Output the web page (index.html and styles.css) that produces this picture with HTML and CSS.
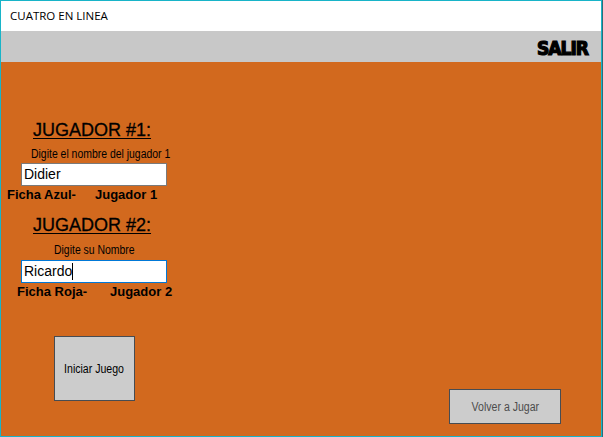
FILE: index.html
```html
<!DOCTYPE html>
<html>
<head>
<meta charset="utf-8">
<link rel="stylesheet" href="styles.css">
</head>
<body>
<div class="window">
  <div class="titlebar">CUATRO EN LINEA</div>
  <div class="toolbar"><span class="salir">SALIR</span></div>
  <div class="main">
    <div class="heading h1">JUGADOR #1:</div>
    <div class="label l1"><span class="narrow">Digite el nombre del jugador 1</span></div>
    <div class="textbox tb1">Didier</div>
    <div class="ficha f1"><span class="fname w1">Ficha Azul-</span><span>Jugador 1</span></div>
    <div class="heading h2">JUGADOR #2:</div>
    <div class="label l2"><span class="narrow">Digite su Nombre</span></div>
    <div class="textbox tb2 focused">Ricardo<span class="caret"></span></div>
    <div class="ficha f2"><span class="fname w2">Ficha Roja-</span><span>Jugador 2</span></div>
    <div class="buttons">
      <div class="btn btn-start"><span class="narrow-c">Iniciar Juego</span></div>
      <div class="btn btn-again"><span class="narrow-c">Volver a Jugar</span></div>
    </div>
  </div>
</div>
</body>
</html>
```

FILE: styles.css
```css
html, body {
  margin: 0;
  padding: 0;
}
body {
  background: #2a6d78;
  width: 603px;
  height: 437px;
  overflow: hidden;
}
.window {
  width: 600px;
  height: 435px;
  border: 1px solid #18b4c8;
  background: #ffffff;
  display: flex;
  flex-direction: column;
}
.titlebar {
  height: 30px;
  line-height: 30px;
  padding-left: 9px;
  font-family: "Open Sans", "Noto Sans", sans-serif;
  font-size: 11.5px;
  color: #000;
  background: #fff;
}
.toolbar {
  height: 31px;
  background: #c8c8c8;
  display: flex;
  justify-content: flex-end;
  align-items: center;
  padding-right: 13px;
}
.salir {
  font-family: "DejaVu Sans", sans-serif;
  font-stretch: condensed;
  font-weight: bold;
  font-size: 19px;
  letter-spacing: -1px;
  -webkit-text-stroke: 1.2px #000;
  color: #000;
  line-height: 20px;
  margin-top: 2px;
}
.main {
  flex: 1;
  background: #d2691e;
  display: flex;
  flex-direction: column;
  align-items: flex-start;
}
.heading {
  font-family: "Liberation Sans", Arial, sans-serif;
  font-size: 18px;
  line-height: 20px;
  height: 20px;
  text-decoration: underline;
  text-decoration-thickness: 1px;
  text-underline-offset: 2px;
  color: #000;
  margin-left: 32px;
  -webkit-text-stroke: 0.3px #000;
}
.h1 { margin-top: 58px; }
.h2 { margin-top: 13px; }
.label {
  font-family: "Liberation Sans", Arial, sans-serif;
  font-size: 12px;
  line-height: 13px;
  height: 13px;
  color: #000;
  white-space: nowrap;
}
.narrow {
  display: inline-block;
  transform: scaleX(0.87);
  transform-origin: left center;
}
.narrow-c {
  display: inline-block;
  white-space: nowrap;
  transform: scaleX(0.88);
  transform-origin: center center;
}
.l1 { margin-top: 8px; margin-left: 30px; }
.l2 { margin-top: 9px; margin-left: 53px; }
.textbox {
  width: 142px;
  height: 21px;
  border: 1px solid #7a7a7a;
  background: #fff;
  font-family: "Liberation Sans", Arial, sans-serif;
  font-size: 14px;
  line-height: 21px;
  padding-left: 2px;
  color: #000;
  margin-left: 20px;
  display: flex;
  align-items: center;
}
.tb1 { margin-top: 2px; }
.tb2 { margin-top: 3px; }
.focused { border-color: #0078d7; }
.caret {
  display: inline-block;
  width: 1px;
  height: 17px;
  background: #000;
}
.ficha {
  display: flex;
  font-family: "Liberation Sans", Arial, sans-serif;
  font-weight: bold;
  font-size: 13px;
  line-height: 15px;
  height: 15px;
  color: #000;
  margin-top: 1px;
}
.f1 { margin-left: 6px; }
.f2 { margin-left: 16px; }
.w1 { width: 88px; }
.w2 { width: 93px; }
.buttons {
  align-self: stretch;
  display: flex;
  align-items: flex-start;
  margin-top: 37px;
}
.btn {
  box-sizing: border-box;
  border: 1px solid #474c52;
  background: #cccccc;
  display: flex;
  align-items: center;
  justify-content: center;
  font-family: "Liberation Sans", Arial, sans-serif;
  font-size: 12px;
}
.btn-start {
  width: 81px;
  height: 65px;
  margin-left: 53px;
  color: #000;
}
.btn-again {
  width: 112px;
  height: 35px;
  margin-left: auto;
  margin-right: 40px;
  margin-top: 53px;
  color: #4c4c4c;
}
```
